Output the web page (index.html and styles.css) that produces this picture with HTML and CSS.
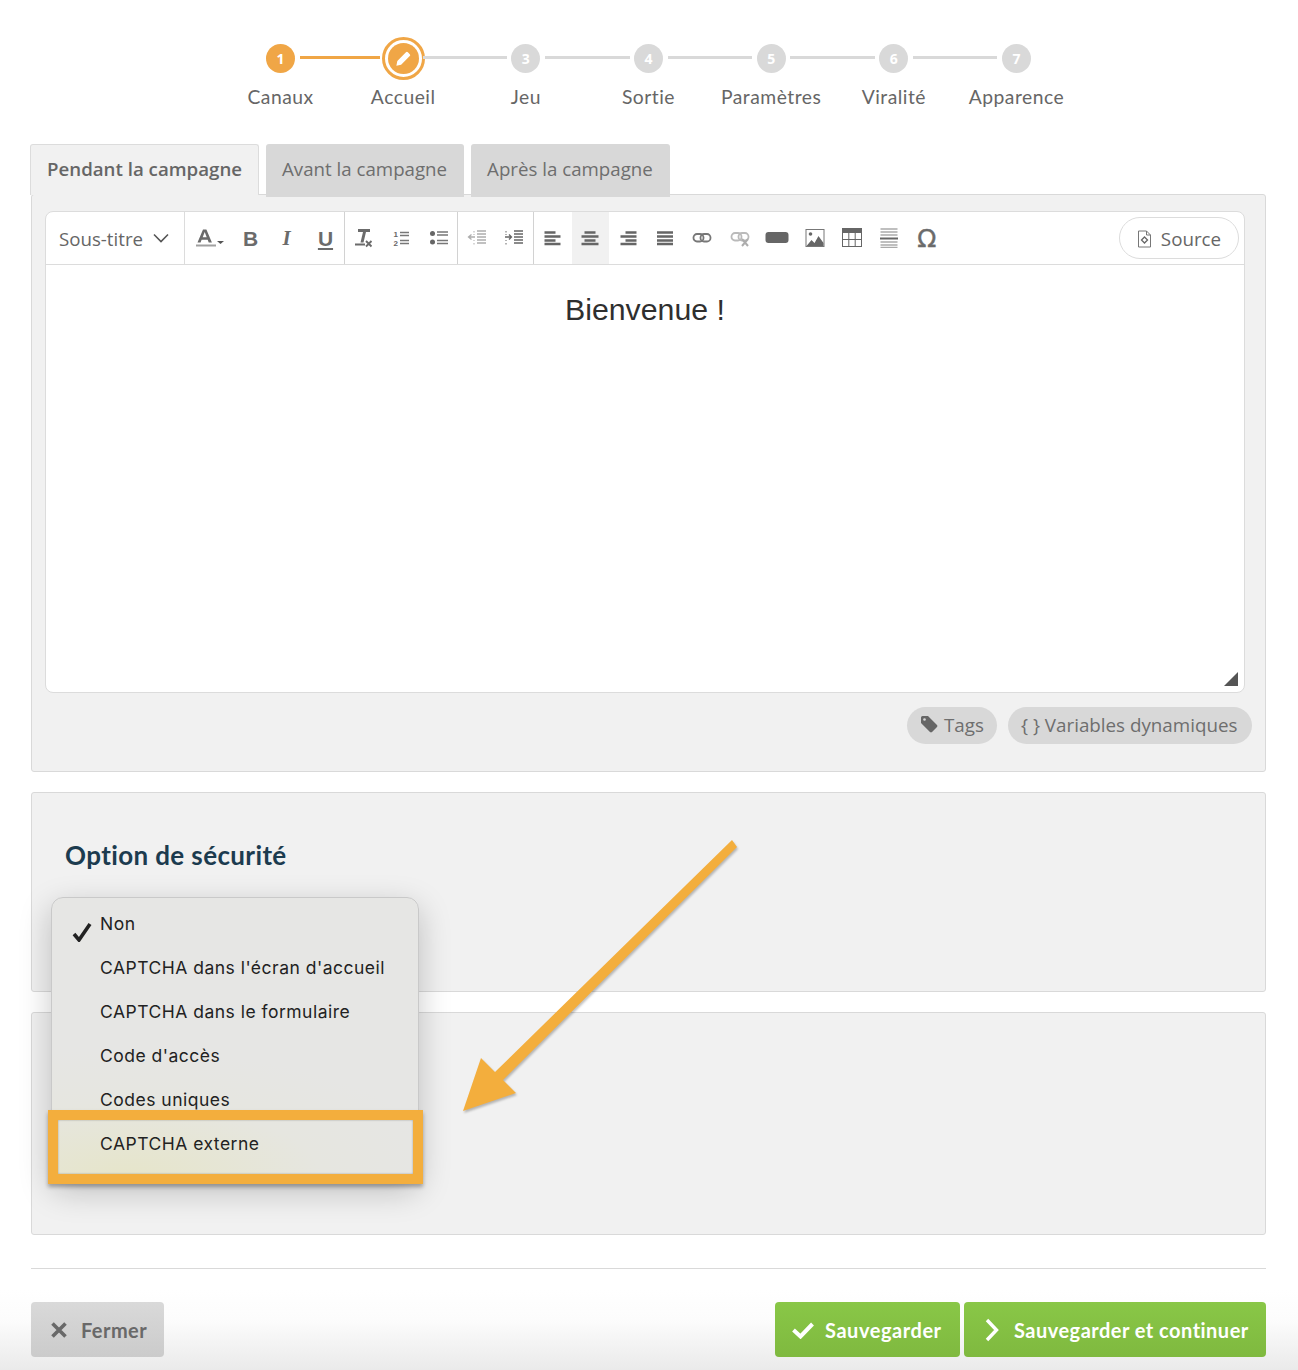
FILE: index.html
```html
<!DOCTYPE html>
<html lang="fr">
<head>
<meta charset="utf-8">
<title>Option de sécurité</title>
<link rel="stylesheet" href="styles.css">
</head>
<body>
<div class="page">
  <ol class="stepper">
    <li class="step done"><span class="dot-wrap"><span class="dot">1</span></span><span class="step-label">Canaux</span></li>
    <li class="step current"><span class="dot-wrap"><span class="ring"><span class="dot"><svg class="pencil" viewBox="0 0 20 20"><path d="M2.500 17.500l1-5L12.600 3.400a1.400 1.400 0 0 1 2 0l2 2a1.400 1.400 0 0 1 0 2L7.500 16.500z" fill="#fff"/></svg></span></span></span><span class="step-label">Accueil</span></li>
    <li class="step"><span class="dot-wrap"><span class="dot">3</span></span><span class="step-label">Jeu</span></li>
    <li class="step"><span class="dot-wrap"><span class="dot">4</span></span><span class="step-label">Sortie</span></li>
    <li class="step"><span class="dot-wrap"><span class="dot">5</span></span><span class="step-label">Paramètres</span></li>
    <li class="step"><span class="dot-wrap"><span class="dot">6</span></span><span class="step-label">Viralité</span></li>
    <li class="step"><span class="dot-wrap"><span class="dot">7</span></span><span class="step-label">Apparence</span></li>
  </ol>

  <div class="tabs">
    <div class="tab active">Pendant la campagne</div>
    <div class="tab">Avant la campagne</div>
    <div class="tab">Après la campagne</div>
  </div>

  <section class="panel panel-editor">
    <div class="editor">
      <div class="toolbar">
        <div class="combo"><span>Sous-titre</span><svg class="chev" viewBox="0 0 16 10"><path d="M1 1.500l7 7 7-7" fill="none" stroke="#555" stroke-width="1.600"/></svg></div>
        <div class="tgroup">
          <span class="tbtn wide"><svg class="ico" viewBox="0 0 32 20"><path d="M3.500 14.500L9 1.500h3.400l5.500 13h-3.200l-1-2.700H7.600l-1 2.700zM8.700 9.200h4l-2-5.200z" fill="#6b6b6b"/><rect x="2" y="16.500" width="20" height="2" fill="#a0a0a0"/><path d="M23 13h7l-3.500 3z" fill="#555"/></svg></span>
          <span class="tbtn tletter">B</span>
          <span class="tbtn tletter ital"><span class="ital-shift">I</span></span>
          <span class="tbtn tletter under">U</span>
        </div>
        <div class="tgroup">
          <span class="tbtn"><svg class="ico" viewBox="0 0 20 20"><path d="M4 1h12v3h-4l-2.500 10.500H6.500L9 4H4z" fill="#6b6b6b"/><rect x="1" y="15.500" width="10" height="2" fill="#6b6b6b"/><path d="M12 13l5.500 5.500M17.500 13L12 18.500" stroke="#6b6b6b" stroke-width="1.900"/></svg></span>
          <span class="tbtn"><svg class="ico" viewBox="0 0 20 20"><path d="M9 4.500h9M9 7.500h9M9 12.500h9M9 15.500h9" stroke="#777" stroke-width="1.400"/><text x="2.500" y="9" class="olnum">1</text><text x="2.500" y="18" class="olnum">2</text></svg></span>
          <span class="tbtn"><svg class="ico" viewBox="0 0 20 20"><circle cx="3.500" cy="5.500" r="2.500" fill="#666"/><circle cx="3.500" cy="14" r="2.500" fill="#666"/><path d="M8 4h11M8 7h11M8 12.500h11M8 15.500h11" stroke="#777" stroke-width="1.400"/></svg></span>
        </div>
        <div class="tgroup">
          <span class="tbtn"><svg class="ico dim" viewBox="0 0 20 20"><path d="M10 3h9M10 6h9M10 9h9M10 12h9M10 15h9" stroke="#999" stroke-width="1.300"/><path d="M8 9H1.500M4.500 6.500L1.500 9l3 2.500" fill="none" stroke="#999" stroke-width="1.300"/><path d="M7 3v1.500M7 6v1M7 12v1M7 15v1.500" stroke="#999"/></svg></span>
          <span class="tbtn"><svg class="ico" viewBox="0 0 20 20"><path d="M10 3h9M10 6h9M10 9h9M10 12h9M10 15h9" stroke="#666" stroke-width="1.300"/><path d="M1 9h6.500M5 6.500L7.500 9 5 11.500" fill="none" stroke="#666" stroke-width="1.300"/><path d="M2 3v1.500M2 6v1M2 12v1M2 15v1.500" stroke="#666"/></svg></span>
        </div>
        <div class="tgroup last">
          <span class="tbtn"><svg class="ico" viewBox="0 0 20 20"><path d="M1.500 4.500h11M1.500 8.500h16M1.500 12.500h11M1.500 16h16" stroke="#666" stroke-width="2.400"/></svg></span>
          <span class="tbtn on"><svg class="ico" viewBox="0 0 20 20"><path d="M4.500 4.500h11M1.500 8.500h17M4.500 12.500h11M1.500 16h17" stroke="#666" stroke-width="2.400"/></svg></span>
          <span class="tbtn"><svg class="ico" viewBox="0 0 20 20"><path d="M7.500 4.500h11M2.500 8.500h16M7.500 12.500h11M2.500 16h16" stroke="#666" stroke-width="2.400"/></svg></span>
          <span class="tbtn"><svg class="ico" viewBox="0 0 20 20"><path d="M2 4.500h16M2 8.500h16M2 12.500h16M2 16h16" stroke="#666" stroke-width="2.400"/></svg></span>
          <span class="tbtn"><svg class="ico" viewBox="0 0 20 20"><rect x="1.500" y="6" width="10" height="7.500" rx="3.500" fill="none" stroke="#777" stroke-width="1.800"/><rect x="8.500" y="6" width="10" height="7.500" rx="3.500" fill="none" stroke="#777" stroke-width="1.800"/></svg></span>
          <span class="tbtn"><svg class="ico dim" viewBox="0 0 20 20"><rect x="1.500" y="5" width="10" height="7.500" rx="3.500" fill="none" stroke="#aaa" stroke-width="1.800"/><rect x="8.500" y="5" width="10" height="7.500" rx="3.500" fill="none" stroke="#aaa" stroke-width="1.800"/><path d="M12 11l6 7M18 11l-6 7" stroke="#999" stroke-width="2"/></svg></span>
          <span class="tbtn"><svg class="ico ico-lg" viewBox="0 0 24 20"><rect x="0.500" y="4" width="23" height="11" rx="3" fill="#666"/></svg></span>
          <span class="tbtn"><svg class="ico" viewBox="0 0 20 20"><rect x="1" y="1.500" width="18" height="17" fill="#fff" stroke="#777"/><circle cx="5.500" cy="6" r="1.800" fill="#666"/><path d="M1.500 18l5-6 3 3 4-7 5 7v3z" fill="#666"/></svg></span>
          <span class="tbtn"><svg class="ico" viewBox="0 0 20 20"><rect x="0.500" y="0.500" width="19" height="18" fill="#fff" stroke="#666"/><rect x="0.500" y="0.500" width="19" height="4.500" fill="#666"/><path d="M0.500 11.500h19M6.800 5v14M13.200 5v14" stroke="#666"/></svg></span>
          <span class="tbtn"><svg class="ico" viewBox="0 0 20 20"><path d="M1.500 1h17M1.500 4h17M1.500 7h17M1.500 14h17M1.500 17h17M1.500 19.500h17" stroke="#aaa" stroke-width="1.400"/><path d="M1 10.500h18" stroke="#666" stroke-width="2"/></svg></span>
          <span class="tbtn tomega">Ω</span>
        </div>
        <div class="source"><svg class="doc" viewBox="0 0 14 18"><path d="M1 1h8l4 4v12H1z" fill="#fff" stroke="#777"/><path d="M9 1v4h4" fill="none" stroke="#777"/><path d="M7 7l3 3-3 3-3-3z" fill="none" stroke="#666" stroke-width="1.300"/></svg><span>Source</span></div>
      </div>
      <div class="edit-area">
        <h2 class="welcome">Bienvenue !</h2>
        <svg class="resize" viewBox="0 0 14 14"><path d="M14 0v14H0z" fill="#555"/></svg>
      </div>
    </div>
    <div class="chips">
      <div class="chip chip-tags"><svg class="tag" viewBox="0 0 18 18"><path d="M1 2.500A1.500 1.500 0 0 1 2.500 1H8l9 9a1.500 1.500 0 0 1 0 2l-5 5a1.500 1.500 0 0 1-2 0L1 8z" fill="#666"/><circle cx="4.500" cy="4.500" r="1.300" fill="#d8d8d8"/></svg>Tags</div>
      <div class="chip chip-vars">{ } Variables dynamiques</div>
    </div>
  </section>

  <section class="panel panel-security"><h3 class="sec-title">Option de sécurité</h3></section>
  <section class="panel panel-empty"></section>

  <hr class="rule">

  <footer class="actions">
    <button class="btn btn-grey"><svg class="bico-x" viewBox="0 0 18 18"><path d="M2.500 2.500l13 13M15.500 2.500l-13 13" stroke="#696969" stroke-width="3.600"/></svg>Fermer</button>
    <div class="actions-right">
      <button class="btn btn-green"><svg class="bico-check" viewBox="0 0 24 18"><path d="M2.500 9l7 6.500L21.500 3" fill="none" stroke="#fff" stroke-width="4"/></svg>Sauvegarder</button>
      <button class="btn btn-green btn-next"><svg class="bico-next" viewBox="0 0 14 24"><path d="M2 2l9.500 10L2 22" fill="none" stroke="#fff" stroke-width="3.400"/></svg>Sauvegarder et continuer</button>
    </div>
  </footer>

  <div class="menu">
    <div class="menu-item"><svg class="tick" viewBox="0 0 20 20"><path d="M2 12l5 6L18 2" fill="none" stroke="#222" stroke-width="3.600"/></svg><span class="item-up">Non</span></div>
    <div class="menu-item">CAPTCHA dans l'écran d'accueil</div>
    <div class="menu-item">CAPTCHA dans le formulaire</div>
    <div class="menu-item">Code d'accès</div>
    <div class="menu-item">Codes uniques</div>
    <div class="menu-item">CAPTCHA externe</div>
  </div>
  <div class="highlight"></div>
  <svg class="arrow" viewBox="0 0 300 300"><path d="M272 2L277 9 43 242 56 255 3 273 21 220 35 234z" fill="#f3ae3d"/></svg>
</div>
</body>
</html>
```
FILE: styles.css
```css
* { box-sizing: border-box; }
html, body { margin: 0; padding: 0; }
body {
  width: 1298px;
  height: 1370px;
  overflow: hidden;
  font-family: "Open Sans", sans-serif;
  color: #6b6b6b;
  background: linear-gradient(to bottom, #fff 0, #fff 1290px, #fcfcfc 1320px, #eaeaea 1370px);
}
.page { position: relative; height: 1370px; padding: 37px 32px 0 31px; }

.stepper { display: flex; justify-content: center; list-style: none; margin: 0; padding: 0; height: 107px; }
.step { position: relative; width: 122.67px; display: flex; flex-direction: column; align-items: center; }
.dot-wrap { height: 43px; display: flex; align-items: center; justify-content: center; }
.dot { width: 29px; height: 29px; border-radius: 50%; background: #d9d9d9; color: #fff; font: 700 14px/29px "Open Sans", sans-serif; text-align: center; display: flex; align-items: center; justify-content: center; }
.ring { width: 43px; height: 43px; border: 3px solid #f0a646; border-radius: 50%; display: flex; align-items: center; justify-content: center; background: #fff; }
.step.done .dot, .step.current .dot { background: #f0a646; }
.step.current .dot { width: 31px; height: 31px; }
.pencil { width: 19px; height: 19px; }
.step::after { content: ""; position: absolute; left: calc(50% + 19px); top: 19px; width: 84.67px; height: 3px; background: #d9d9d9; }
.step.done::after { width: 80px; background: #f0a646; }
.step.current::after { left: calc(50% + 20px); width: 84px; }
.step:last-child::after { display: none; }
.step-label { margin-top: 5px; font: 400 19.300px/23px "Lato", sans-serif; letter-spacing: .5px; color: #666; white-space: nowrap; }

.tabs { display: flex; gap: 7px; align-items: flex-start; margin-left: -1px; height: 50px; }
.tab { position: relative; height: 53px; padding: 0 17px 0 16px; background: #d8d8d8; border-radius: 3px 3px 0 0; font-size: 18.700px; line-height: 49px; color: #6e6e6e; white-space: nowrap; }
.tab.active { z-index: 1; height: 51px; background: #f1f1f1; border: 1px solid #dcdcdc; border-bottom: 0; padding: 0 16px; line-height: 47px; font-weight: 600; color: #666; }

.panel { background: #f1f1f1; border: 1px solid #d9d9d9; border-radius: 3px; }
.panel-editor { height: 578px; padding: 16px 13px 0; }
.editor { width: 1200px; height: 482px; background: #fff; border: 1px solid #dcdcdc; border-radius: 8px; overflow: hidden; display: flex; flex-direction: column; }
.toolbar { height: 53px; flex: none; display: flex; border-bottom: 1px solid #dcdcdc; }
.combo { width: 139px; border-right: 1px solid #dcdcdc; display: flex; align-items: center; gap: 10px; padding-left: 13px; font-size: 18.700px; color: #666; }
.chev { width: 16px; height: 10px; }
.tgroup { display: flex; border-right: 1px solid #d2d2d2; }
.tgroup.last { border-right: 0; }
.tbtn { width: 37.400px; height: 52px; display: flex; align-items: center; justify-content: center; color: #6b6b6b; }
.tbtn.wide { width: 47px; }
.tbtn.on { background: #f1f1f1; }
.ico { width: 20px; height: 20px; flex: none; }
.tbtn.wide .ico { width: 32px; margin-left: 2px; }
.ico-lg { width: 24px; }
.tbtn .ico.dim { opacity: .8; }
.tletter { font: 700 21px/1 "Liberation Sans", sans-serif; }
.ital { font: italic 700 21px/1 "Liberation Serif", serif; }
.ital-shift { margin-right: 3px; }
.under { text-decoration: underline; text-underline-offset: 2px; }
.tomega { font: 400 25px/1 "DejaVu Sans", sans-serif; -webkit-text-stroke: .4px #6b6b6b; }
.olnum { font: 700 8px "Liberation Sans", sans-serif; fill: #666; }
.source { margin: 5px 5px 0 auto; width: 120px; height: 42px; padding-top: 1px; border: 1px solid #dcdcdc; border-radius: 21px; display: flex; align-items: center; justify-content: center; gap: 9px; font-size: 18.800px; color: #666; }
.doc { width: 15px; height: 18px; }
.edit-area { position: relative; flex: 1; text-align: center; padding: 26px 0 0; }
.welcome { margin: 0; font: 400 30.300px/38px "Liberation Sans", sans-serif; color: #2f2f2f; }
.resize { position: absolute; right: 6px; bottom: 6px; width: 14px; height: 14px; }
.chips { display: flex; justify-content: flex-end; gap: 11px; margin-top: 14px; }
.chip { height: 37px; padding: 0 13px; background: #d8d8d8; border-radius: 18.500px; font-size: 18.800px; line-height: 37px; color: #6e6e6e; display: flex; align-items: center; gap: 6px; white-space: nowrap; }
.chip-tags { width: 90px; padding-right: 0; }
.chip-vars { width: 244px; }
.tag { width: 18px; height: 18px; margin-bottom: 3px; }

.panel-security { height: 200px; margin-top: 20px; padding: 45px 33px 0; }
.sec-title { margin: 0; font: 700 26px/34px "Lato", sans-serif; letter-spacing: .38px; color: #1c3b4f; }
.panel-empty { height: 223px; margin-top: 20px; }
.rule { height: 1px; border: 0; margin: 33px 0; background: #d9d9d9; }

.actions { display: flex; justify-content: space-between; }
.actions-right { display: flex; gap: 4px; }
.btn { height: 55px; border: 0; border-radius: 4px; padding: 0 16px; display: flex; align-items: center; font: 700 20px "Lato", sans-serif; letter-spacing: .55px; white-space: nowrap; }
.btn-grey { width: 133px; padding-left: 19px; background: linear-gradient(#d9d9d9, #cbcbcb); color: #696969; gap: 13px; letter-spacing: .45px; }
.btn-green { width: 185px; background: linear-gradient(#89c747, #7fb93f); color: #fff; gap: 10px; }
.btn-next { width: 302px; padding-left: 21px; gap: 15px; letter-spacing: .48px; }
.bico-x { width: 18px; height: 18px; }
.bico-check { width: 24px; height: 18px; }
.bico-next { width: 14px; height: 24px; }

.menu { position: absolute; left: 51px; top: 897px; width: 368px; height: 284px; padding-top: 4px; background: radial-gradient(ellipse 330px 130px at 20% 100%, #e6e5c9 0, #e6e6e0 60%, #e6e6e4 100%); border: 1px solid #c9c9c9; border-radius: 12px; box-shadow: 0 10px 32px rgba(0,0,0,.22); }
.menu-item { position: relative; height: 44px; padding-left: 48px; font: 400 17.500px/44px "Inter", sans-serif; letter-spacing: .49px; color: #222; white-space: nowrap; }
.item-up { display: block; }
.tick { position: absolute; left: 20px; top: 20px; width: 20px; height: 20px; }
.highlight { position: absolute; left: 48px; top: 1110px; width: 375px; height: 74px; border: 10px solid #f3ae3d; box-shadow: 0 3px 4px rgba(0,0,0,.3), inset 0 0 2px rgba(0,0,0,.35); }
.arrow { position: absolute; left: 460px; top: 838px; width: 300px; height: 300px; overflow: visible; filter: drop-shadow(1px 2px 1px rgba(0,0,0,.25)); }
```
